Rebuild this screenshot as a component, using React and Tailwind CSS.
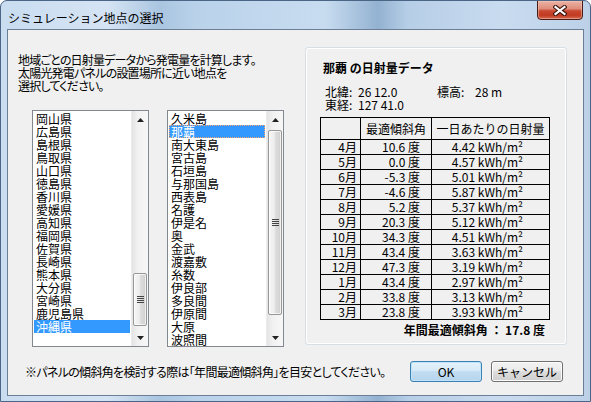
import React from "react";

const prefs = ["岡山県","広島県","島根県","鳥取県","山口県","徳島県","香川県","愛媛県","高知県","福岡県","佐賀県","長崎県","熊本県","大分県","宮崎県","鹿児島県","沖縄県"];
const places = ["久米島","那覇","南大東島","宮古島","石垣島","与那国島","西表島","名護","伊是名","奥","金武","渡嘉敷","糸数","伊良部","多良間","伊原間","大原","波照間"];
const rows = [
  ["4月","10.6","4.42"],["5月","0.0","4.57"],["6月","-5.3","5.01"],["7月","-4.6","5.87"],
  ["8月","5.2","5.37"],["9月","20.3","5.12"],["10月","34.3","4.51"],["11月","43.4","3.63"],
  ["12月","47.3","3.19"],["1月","43.4","2.97"],["2月","33.8","3.13"],["3月","23.8","3.93"],
];

function Arrow({ up }) {
  return (
    <div className="h-[17px] flex items-center justify-center">
      <svg width="7" height="4" viewBox="0 0 7 4">
        {up ? <polygon points="0,4 7,4 3.5,0" fill="#222" /> : <polygon points="0,0 7,0 3.5,4" fill="#222" />}
      </svg>
    </div>
  );
}

function ScrollBar({ gapClass, thumbClass }) {
  return (
    <div className="w-[17px] flex flex-col bg-[linear-gradient(90deg,#e4e4e4,#f1f1f1_35%,#f7f7f7)] border-l border-[#ececec]">
      <Arrow up />
      <div className={gapClass} />
      <div className={"mx-[1px] rounded-[2px] border border-[#979797] bg-[linear-gradient(90deg,#f6f6f6,#ececec_45%,#dcdcdc_55%,#d0d0d0)] shadow-[inset_0_0_0_1px_#ffffffb0] flex items-center justify-center " + thumbClass}>
        <div className="flex flex-col gap-[1px]">
          <div className="w-[7px] h-[1px] bg-[#444]" />
          <div className="w-[7px] h-[1px] bg-[#444]" />
          <div className="w-[7px] h-[1px] bg-[#444]" />
          <div className="w-[7px] h-[1px] bg-[#444]" />
        </div>
      </div>
      <div className="flex-1" />
      <Arrow />
    </div>
  );
}

function ListBox({ items, selected, focus, gapClass, thumbClass }) {
  return (
    <div className="w-[117px] h-[237px] border border-[#828790] bg-white flex">
      <div className="flex-1 overflow-hidden pt-[1px] px-[1px]">
        {items.map((t) => (
          <div
            key={t}
            className={
              t === selected
                ? "h-[13px] leading-[11px] pl-[1px] bg-[#3399ff] text-white border border-dotted " + (focus ? "border-[#f6a27a]" : "border-[#3399ff]")
                : "h-[13px] leading-[13px] pl-[2px] whitespace-nowrap"
            }
          >
            {t}
          </div>
        ))}
      </div>
      <ScrollBar gapClass={gapClass} thumbClass={thumbClass} />
    </div>
  );
}

export default function App() {
  return (
    <div className="w-[591px] h-[402px] overflow-hidden rounded-t-[7px] border border-[#4a6585] bg-[linear-gradient(90deg,#c9dcf0_0%,#d5e4f4_18%,#aac5e0_27%,#b9d2ea_33%,#c8dcf0_55%,#93b2d1_64%,#b6cee7_69%,#c9dbef_85%,#bcd1e8_100%)] flex flex-col font-['Noto_Sans_CJK_JP',sans-serif] text-[12px] text-black">
      {/* title bar */}
      <div className="h-[28px] flex items-start shrink-0">
        <div className="pl-[7px] pt-[9px] leading-[15px] text-[12px] text-black">シミュレーション地点の選択</div>
        <div className="ml-auto mr-[7px] w-[46px] h-[20px] -mt-[1px] rounded-b-[4px] border border-[#4a1c16] bg-[linear-gradient(180deg,#ebb3a5_0%,#df8e7b_42%,#c8482f_55%,#c23c22_80%,#d66c50_100%)] shadow-[inset_0_0_0_1px_#f3c8bd80] flex items-center justify-center">
          <svg width="14" height="11" viewBox="0 0 14 11">
            <path d="M2.5 2 L11.5 9 M11.5 2 L2.5 9" stroke="#3b1410" strokeWidth="4.2" strokeLinecap="square" />
            <path d="M2.5 2 L11.5 9 M11.5 2 L2.5 9" stroke="#ffffff" strokeWidth="2.2" strokeLinecap="square" />
          </svg>
        </div>
      </div>

      {/* client area */}
      <div className="mx-[6px] h-[367px] shrink-0 border border-[#6b7e96] bg-[#f0f0f0] flex flex-col">
        <div className="flex pt-[17px]">
          {/* left column */}
          <div className="w-[297px] pl-[10px] flex flex-col">
            <div className="mt-[6px] leading-[13px] [font-feature-settings:'palt'] tracking-[-0.8px]">
              <div>地域ごとの日射量データから発電量を計算します。</div>
              <div>太陽光発電パネルの設置場所に近い地点を</div>
              <div>選択してください。</div>
            </div>
            <div className="mt-[18px] ml-[14px] flex gap-[18px]">
              <ListBox items={prefs} selected="沖縄県" gapClass="h-[145px]" thumbClass="h-[53px]" />
              <ListBox items={places} selected="那覇" focus gapClass="h-[2px]" thumbClass="h-[185px]" />
            </div>
          </div>

          {/* group box */}
          <div className="w-[262px] h-[298px] border border-[#d5dfe5] rounded-[3px] flex flex-col shadow-[inset_0_0_0_1px_#ffffff]">
            <div className="pl-[17px] pt-[13px] leading-[13px] font-bold">那覇 の日射量データ</div>
            <div className="mt-[11px] pl-[19px] leading-[13px]">
              <div className="flex">
                <span className="w-[33px]">北緯:</span>
                <span className="w-[79px]">26 12.0</span>
                <span className="w-[38px]">標高:</span>
                <span>28 m</span>
              </div>
              <div className="flex">
                <span className="w-[33px]">東経:</span>
                <span>127 41.0</span>
              </div>
            </div>
            <div className="mt-[6px] ml-[14px] grid grid-cols-[40px_71px_118px] border-l border-t border-black w-[230px]">
              <div className="h-[22px] border-r border-b border-black" />
              <div className="h-[22px] border-r border-b border-black flex items-center justify-center">最適傾斜角</div>
              <div className="h-[22px] border-r border-b border-black flex items-center justify-center">一日あたりの日射量</div>
              {rows.map(([m, a, e]) => (
                <React.Fragment key={m}>
                  <div className="h-[15px] leading-[14px] border-r border-b border-black text-right pr-[3px]">{m}</div>
                  <div className="h-[15px] leading-[14px] border-r border-b border-black text-right pr-[11px] whitespace-nowrap">{a} 度</div>
                  <div className="h-[15px] leading-[14px] border-r border-b border-black text-right pr-[26px] whitespace-nowrap">{e} kWh/m²</div>
                </React.Fragment>
              ))}
            </div>
            <div className="mt-[3px] pr-[21px] text-right leading-[13px] font-bold">年間最適傾斜角 ： 17.8 度</div>
          </div>
        </div>

        {/* bottom row */}
        <div className="mt-[14px] h-[21px] flex items-center">
          <div className="pl-[17px] leading-[13px] [font-feature-settings:'palt'] tracking-[-0.7px] whitespace-nowrap">※パネルの傾斜角を検討する際は「年間最適傾斜角」を目安としてください。</div>
          <div className="ml-auto mr-[20px] flex gap-[9px]">
            <button className="w-[72px] h-[21px] rounded-[3px] border border-[#3c7fb1] bg-[linear-gradient(180deg,#e6f2fb_0%,#d6e9f7_45%,#c3ddf1_50%,#b5d4ec_100%)] shadow-[inset_0_0_0_1px_#bfe4fb] leading-[19px] text-[12px]">OK</button>
            <button className="w-[72px] h-[21px] rounded-[3px] border border-[#707070] bg-[linear-gradient(180deg,#f2f2f2_0%,#ebebeb_45%,#dddddd_50%,#cfcfcf_100%)] shadow-[inset_0_0_0_1px_#fcfcfc] leading-[19px] text-[12px]">キャンセル</button>
          </div>
        </div>
      </div>
    </div>
  );
}
